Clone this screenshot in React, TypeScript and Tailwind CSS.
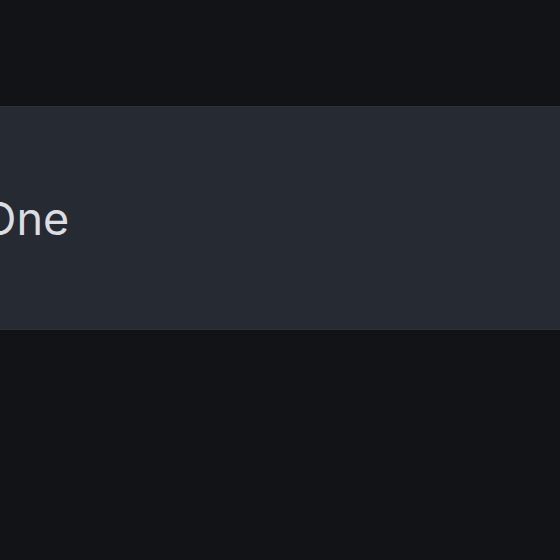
export default function App() {
  return (
    <main className="h-[560px] w-[560px] overflow-hidden bg-[#121317] font-['Inter',sans-serif]">
      <div className="mt-[106px] flex h-[224px] items-center overflow-hidden border-y border-[#2d313a] bg-[#262a33]">
        <h2 className="ml-[-18px] whitespace-nowrap text-[45px] leading-none text-[#dcdde0]">One</h2>
      </div>
    </main>
  );
}
